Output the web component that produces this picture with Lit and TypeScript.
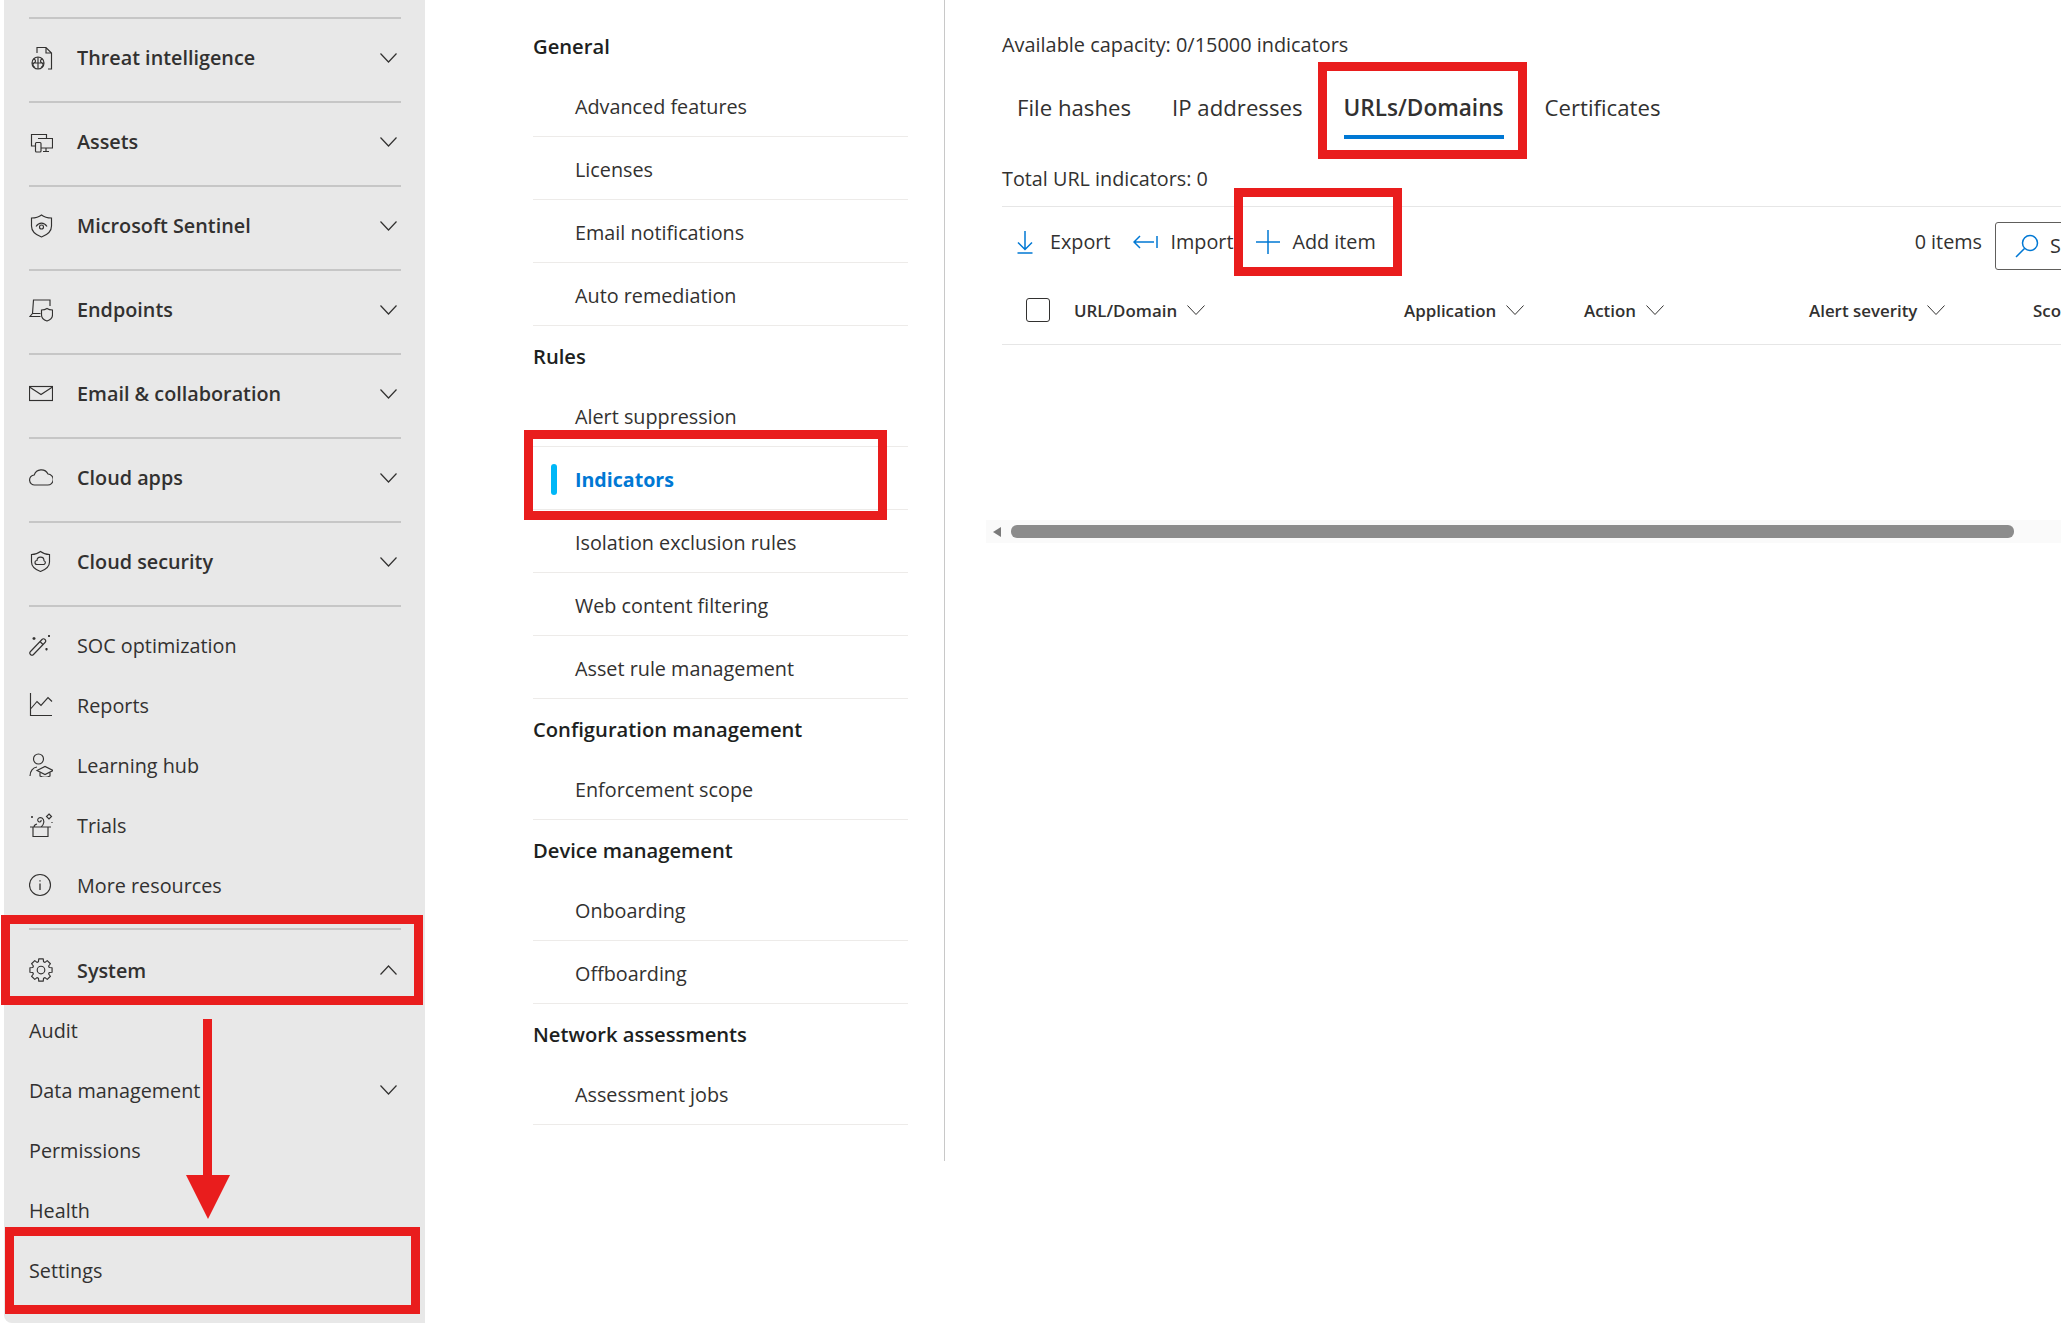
import { LitElement, html, css, svg } from "lit";
import { customElement } from "lit/decorators.js";

const gearPath = (() => {
  const cx = 12, cy = 12, n = 8, R = 11.3, r = 8.6;
  const pts: string[] = [];
  for (let i = 0; i < n; i++) {
    const a = (i * 2 * Math.PI) / n - Math.PI / 2;
    const w = 0.2, v = 0.3;
    const p = (rad: number, ang: number) => `${(cx + rad * Math.cos(ang)).toFixed(2)} ${(cy + rad * Math.sin(ang)).toFixed(2)}`;
    pts.push(`${i === 0 ? "M" : "L"}${p(r, a - v)}`);
    pts.push(`L${p(R, a - w)}`);
    pts.push(`L${p(R, a + w)}`);
    pts.push(`L${p(r, a + v)}`);
  }
  return pts.join(" ") + "Z";
})();

const icons: Record<string, any> = {
  threat: svg`<path d="M8 7V1.500h9l5.500 5.500v16H19M17 1.500V7h5.500"/><circle cx="9" cy="17" r="6"/><path d="M9 11v12M5 13c2 1 2 3 0 4s-1 4 1 4M13 13c-2 1-2 3 0 4s1 4-1 4M3 17h12"/>`,
  assets: svg`<path d="M9 16H2.500V4.500h15v4M9 8.500h14.500v9.500H9M17 18v3.500M14 21.500h6"/><rect x="6.500" y="12.500" width="5.500" height="9.500" rx="1" fill="#e8e8e8"/>`,
  sentinel: svg`<path d="M12.500 1C15 3 18.500 4 22.500 4v8c0 5.500-4.500 9-10 11-5.500-2-10-5.500-10-11V4c4 0 7.500-1 10-3z"/><path d="M7 12.500c3-4.500 8-4.500 11 0"/><circle cx="12.500" cy="13" r="2"/>`,
  endpoints: svg`<path d="M3.500 15.500l1-13.500H21v6M3.500 15.500L1 18.500h10.500M3.500 15.500h8"/><path d="M18 10.500c1.500 1 3.500 1.500 5.500 1.500v5c0 3-2.500 5-5.500 6-3-1-5.500-3-5.500-6v-5c2 0 4-.5 5.500-1.500z" fill="#e8e8e8"/>`,
  email: svg`<rect x=".5" y="4.500" width="23" height="14"/><path d="M.5 5L12 12.500 23.500 5"/>`,
  cloud: svg`<path d="M6 19a5 5 0 0 1-.8-10A7.500 7.500 0 0 1 19 8a5.500 5.500 0 0 1-.5 11z"/>`,
  cloudsec: svg`<path d="M11.500 1.500C14 3.500 17 4.500 20.500 4.500V12c0 4.500-3.500 7.500-9 9.500-5.500-2-9-5-9-9.500V4.500C6 4.500 9 3.500 11.500 1.500z"/><path d="M8 14.500a2 2 0 0 1 0-4 3.500 3.500 0 0 1 7 .2 2 2 0 0 1 0 3.800z"/>`,
  soc: svg`<path d="M1.500 18.500L13 6.500a2.100 2.100 0 0 1 3 3L4.500 21.500a2.100 2.100 0 0 1-3-3zM11 8.500l3 3"/><path d="M5 4v3M3.500 5.500h3M20 2v2M19 3h2M17.500 15v2.500M16.300 16.200h2.400" stroke-width="1.300"/>`,
  reports: svg`<path d="M1.500 0v22.500H23M2 15.500l6-7 4 4 7-8 4 4"/>`,
  learning: svg`<circle cx="9.500" cy="6" r="5"/><path d="M1 23c0-5 3-8.500 7-9"/><path d="M8 17.500l8-4 8 4-8 4z"/><path d="M11 19.500v3.500c3 1.500 7 1.500 10 0v-3.500"/>`,
  trials: svg`<path d="M4 14v9.500h15V14M1 14h21M12 14c3-2 4-7 1-9-2.500-1.200-5 .5-4 3 1 1.800 3.500 1 3-1M5 14c0-1.500 1-2.500 3-3M3 3v2M2 4h2M20 1l2.500 2.500L20 6l-2.500-2.500zM23 9v1"/>`,
  info: svg`<circle cx="11" cy="12" r="10.500"/><path d="M11 10.500V17M11 7.200v1.300" stroke-width="1.300"/>`,
  gear: svg`<path d="${gearPath}" stroke-linejoin="round"/><circle cx="12" cy="12" r="3.800"/>`,
};

const chev = (up = false) => html`<svg class="chev" viewBox="0 0 17 10"><path d="${up ? "M.5 9.500L8.500 1l8 8.500" : "M.5.5L8.500 9l8-8.500"}"/></svg>`;

@customElement("side-nav")
class SideNav extends LitElement {
  static styles = css`
    :host { display: block; width: 421px; height: 1323px; margin-left: 4px; background: #e8e8e8; border-bottom-left-radius: 8px; box-sizing: border-box; padding: 17px 24px 0 25px; flex: none; color: #323130; font-family: "Open Sans", sans-serif; font-size: 19.800px; }
    .group { border-top: 2px solid #c6c6c6; height: 84px; display: flex; align-items: center; padding-bottom: 5px; box-sizing: border-box; font-weight: 600; font-size: 19.800px; }
    .plain { height: 60px; display: flex; align-items: center; }
    .plainlist { padding: 8px 0 0; border-top: 2px solid #c6c6c6; border-bottom: 2px solid #c6c6c6; height: 325px; box-sizing: border-box; }
    .system { height: 70px; display: flex; align-items: flex-end; font-weight: 600; }
    .system .inner { height: 60px; width: 100%; display: flex; align-items: center; }
    .ico { width: 24px; height: 24px; flex: none; margin-right: 24px; fill: none; stroke: #323130; stroke-width: 1.150; }
    .chev { width: 17px; height: 10px; margin-left: auto; margin-right: 4px; fill: none; stroke: #323130; stroke-width: 1.200; flex: none; }
  `;
  render() {
    const groups: [string, string][] = [["threat", "Threat intelligence"], ["assets", "Assets"], ["sentinel", "Microsoft Sentinel"], ["endpoints", "Endpoints"], ["email", "Email & collaboration"], ["cloud", "Cloud apps"], ["cloudsec", "Cloud security"]];
    const plains: [string, string][] = [["soc", "SOC optimization"], ["reports", "Reports"], ["learning", "Learning hub"], ["trials", "Trials"], ["info", "More resources"]];
    return html`
      ${groups.map(([i, t]) => html`<div class="group"><svg class="ico" viewBox="0 0 24 24">${icons[i]}</svg><span>${t}</span>${chev()}</div>`)}
      <div class="plainlist">${plains.map(([i, t]) => html`<div class="plain"><svg class="ico" viewBox="0 0 24 24">${icons[i]}</svg><span>${t}</span></div>`)}</div>
      <div class="system"><div class="inner"><svg class="ico" viewBox="0 0 24 24">${icons.gear}</svg><span>System</span>${chev(true)}</div></div>
      <div class="plain"><span>Audit</span></div>
      <div class="plain"><span>Data management</span>${chev()}</div>
      <div class="plain"><span>Permissions</span></div>
      <div class="plain"><span>Health</span></div>
      <div class="plain"><span>Settings</span></div>
    `;
  }
}

@customElement("sub-nav")
class SubNav extends LitElement {
  static styles = css`
    :host { display: block; width: 520px; height: 1161px; flex: none; box-sizing: border-box; padding: 16px 36px 0 108px; border-right: 1.500px solid #c8c8c8; color: #323130; font-family: "Open Sans", sans-serif; font-size: 19.800px; }
    .head { height: 58px; display: flex; align-items: center; font-weight: 600; font-size: 20.200px; color: #201f1e; box-sizing: border-box; padding-top: 1px; }
    .item { height: 63px; box-sizing: border-box; border-bottom: 1px solid #edebe9; display: flex; align-items: center; padding-left: 42px; padding-top: 2px; position: relative; }
    .item.on { color: #0078d4; font-weight: 700; font-size: 19.600px; }
    .item.on::before { content: ""; position: absolute; left: 18px; top: 17px; width: 6px; height: 31px; border-radius: 3px; background: #00b7f7; }
  `;
  render() {
    const data: [string, string[]][] = [
      ["General", ["Advanced features", "Licenses", "Email notifications", "Auto remediation"]],
      ["Rules", ["Alert suppression", "Indicators", "Isolation exclusion rules", "Web content filtering", "Asset rule management"]],
      ["Configuration management", ["Enforcement scope"]],
      ["Device management", ["Onboarding", "Offboarding"]],
      ["Network assessments", ["Assessment jobs"]],
    ];
    return html`${data.map(([h, items]) => html`<div class="head">${h}</div>${items.map((i) => html`<div class="item ${i === "Indicators" ? "on" : ""}">${i}</div>`)}`)}`;
  }
}

@customElement("main-pane")
class MainPane extends LitElement {
  static styles = css`
    :host { display: block; flex: none; width: 1200px; padding-left: 57px; box-sizing: border-box; color: #323130; font-family: "Open Sans", sans-serif; font-size: 19.800px; }
    .cap { height: 28px; margin-top: 31px; line-height: 28px; font-size: 19.900px; }
    .tabs { display: flex; height: 70px; padding-left: 15px; gap: 41px; margin-top: 14px; }
    .tab { font-size: 22.200px; height: 66px; padding-top: 3px; display: flex; align-items: center; box-sizing: border-box; position: relative; }
    .tab.on { font-weight: 600; font-size: 22.600px; }
    .tab.on::after { content: ""; position: absolute; left: 0; right: 0; bottom: 0; height: 4px; background: #0078d4; }
    .total { height: 28px; line-height: 28px; margin-top: 22px; }
    .bar { margin-top: 13px; height: 70px; border-top: 1px solid #e6e6e6; display: flex; align-items: center; box-sizing: border-box; }
    .btn { display: flex; align-items: center; }
    .bi { fill: none; stroke: #0078d4; stroke-width: 1.500; flex: none; }
    .export { margin-left: 14px; margin-right: 23px; }
    .export .bi { width: 18px; height: 24px; margin-right: 16px; }
    .import .bi { width: 25px; height: 14px; margin-right: 12px; }
    .import { margin-right: 23px; }
    .add .bi { width: 24px; height: 24px; margin-right: 12px; }
    .count { margin-left: auto; margin-right: 13px; }
    .search { width: 200px; height: 48px; margin-top: 8px; border: 1px solid #605e5c; border-radius: 3px; box-sizing: border-box; display: flex; align-items: center; padding-left: 19px; margin-right: -50px; }
    .search .bi { width: 24px; height: 24px; margin-right: 11px; }
    .thead { display: grid; grid-template-columns: 48px 330px 180px 225px 224px 100px; height: 69px; align-items: center; border-bottom: 1px solid #e6e6e6; padding-left: 24px; box-sizing: border-box; font-size: 16.900px; font-weight: 600; width: 1160px; white-space: nowrap; }
    .th { display: flex; align-items: center; gap: 10px; }
    .th svg { width: 18px; height: 10px; fill: none; stroke: #323130; stroke-width: 1; flex: none; }
    .check { width: 24px; height: 24px; border: 1.500px solid #323130; border-radius: 3px; box-sizing: border-box; }
    .track { margin-top: 175px; margin-left: -16px; height: 23px; width: 1200px; background: #fafafa; display: flex; align-items: center; position: relative; }
    .arrow { width: 0; height: 0; border-top: 5px solid transparent; border-bottom: 5px solid transparent; border-right: 8px solid #7a7a7a; margin-left: 7px; }
    .thumb { margin-left: 10px; width: 1003px; height: 13px; border-radius: 6px; background: #8c8c8c; }
  `;
  render() {
    const th = (t: string) => html`<div class="th"><span>${t}</span><svg viewBox="0 0 18 10"><path d="M.5.5L9 9.500 17.500.5"/></svg></div>`;
    return html`
      <div class="cap">Available capacity: 0/15000 indicators</div>
      <div class="tabs">
        <div class="tab">File hashes</div><div class="tab">IP addresses</div><div class="tab on">URLs/Domains</div><div class="tab">Certificates</div>
      </div>
      <div class="total">Total URL indicators: 0</div>
      <div class="bar">
        <div class="btn export"><svg class="bi" viewBox="0 0 18 24"><path d="M9 1v18M2 12.500L9 19.500l7-7M1.500 23h15"/></svg>Export</div>
        <div class="btn import"><svg class="bi" viewBox="0 0 25 14"><path d="M24 1v12M21 7H1M7 1L1 7l6 6"/></svg>Import</div>
        <div class="btn add"><svg class="bi" viewBox="0 0 24 24"><path d="M12 0v24M0 12h24"/></svg>Add item</div>
        <div class="count">0 items</div>
        <div class="search"><svg class="bi" viewBox="0 0 24 24"><circle cx="15" cy="9" r="7.500"/><path d="M9.500 14.500L1 23"/></svg>Search</div>
      </div>
      <div class="thead">
        <div class="check"></div>
        ${th("URL/Domain")}${th("Application")}${th("Action")}${th("Alert severity")}<div class="th">Scope</div>
      </div>
      <div class="track"><div class="arrow"></div><div class="thumb"></div></div>
    `;
  }
}

@customElement("app-root")
class AppRoot extends LitElement {
  static styles = css`
    :host { display: block; width: 2061px; height: 1323px; overflow: hidden; position: relative; background: #fff; }
    .wrap { display: flex; align-items: flex-start; width: 2300px; }
    .mark { position: absolute; border: 9px solid #e91d1d; box-sizing: border-box; }
    .m1 { left: 1px; top: 915px; width: 422px; height: 90px; }
    .m2 { left: 5px; top: 1227px; width: 415px; height: 87px; }
    .m3 { left: 524px; top: 430px; width: 363px; height: 90px; }
    .m4 { left: 1318px; top: 62px; width: 209px; height: 97px; }
    .m5 { left: 1234px; top: 188px; width: 168px; height: 88px; }
    .arrow { position: absolute; left: 180px; top: 1017px; width: 56px; height: 205px; }
    .arrow path { fill: #e91d1d; }
  `;
  render() {
    return html`
      <div class="wrap"><side-nav></side-nav><sub-nav></sub-nav><main-pane></main-pane></div>
      <div class="mark m1"></div><div class="mark m2"></div><div class="mark m3"></div><div class="mark m4"></div><div class="mark m5"></div>
      <svg class="arrow" viewBox="0 0 56 205"><path d="M23 2h9v156h-9zM6 158h44l-22 44z"/></svg>
    `;
  }
}
